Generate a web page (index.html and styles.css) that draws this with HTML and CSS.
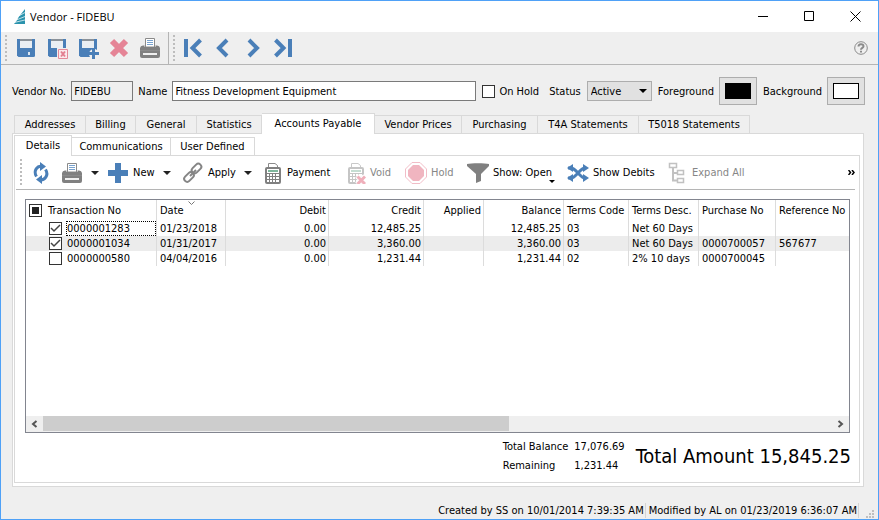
FILE: index.html
```html
<!DOCTYPE html>
<html lang="en">
<head>
    <meta charset="UTF-8">
    <meta name="viewport" content="width=device-width, initial-scale=1.0">
    <title>Vendor - FIDEBU</title>
    <link rel="stylesheet" href="styles.css">
</head>
<body>
    <!-- Shared icon shapes -->
    <svg class="defs" width="0" height="0" aria-hidden="true">
        <symbol id="floppy" viewBox="0 0 22 22">
            <path fill="#4a7fb8" d="M2 2H20V18.500a1.500 1.500 0 0 1-1.500 1.500H3.500L2 18.500z"/>
            <path fill="#8b9299" d="M5 2H17V4H5z"/>
            <path fill="#e9eef3" d="M5 4H17V11H5z"/>
            <path fill="#dbe7f3" d="M13 15H15V18H13z"/>
        </symbol>
        <symbol id="printer" viewBox="0 0 22 22">
            <path fill="#fff" stroke="#8a8a8a" d="M6.500 1.500H15.500V10H6.500z"/>
            <path stroke="#79a3cf" d="M8 3.500H14M8 5.500H14M8 7.500H14"/>
            <path fill="#808080" d="M4 8.500H5.500V10H16.500V8.500H18a3 3 0 0 1 3 2.500V13H1V11a3 3 0 0 1 3-2.500zM1 14H21V19a2 2 0 0 1-2 2H3a2 2 0 0 1-2-2z"/>
            <path fill="#efefef" d="M4 16H18V18H4z"/>
            <path stroke="#8a8a8a" d="M1 13.500H21"/>
        </symbol>
        <symbol id="calc" viewBox="0 0 18 22">
            <path fill="#fff" stroke="#8a8a8a" d="M4.500 6V1.500H11l2.500 2V6"/>
            <path fill="#808080" d="M3 5H15a2 2 0 0 1 2 2V20a2 2 0 0 1-2 2H3a2 2 0 0 1-2-2V7a2 2 0 0 1 2-2z"/>
            <path fill="#fff" d="M3 7H15V11H3zM3 12H5V14H3zM6 12H8V14H6zM9 12H11V14H9zM12 12H15V14H12zM3 15H5V17H3zM6 15H8V17H6zM9 15H11V17H9zM12 15H15V17H12zM3 18H5V20H3zM6 18H8V20H6zM9 18H11V20H9zM12 18H15V20H12z"/>
            <path fill="#7fb69c" d="M4 8H14V10H4z"/>
        </symbol>
    </svg>

    <div class="window">
        <header class="title-bar">
            <svg class="logo" width="12" height="16" viewBox="0 0 12 16"><path fill="#2b93ad" d="M11 0V15H0L2 12.500L3 11L5 7.500z"/><path stroke="#fff" stroke-width=".7" d="M2 8.500L11 3.500M1 11.500L11 7.500M0 13.500L11 11"/></svg>
            <h1>Vendor - FIDEBU</h1>
            <button type="button" class="win-btn" aria-label="Minimize"><svg width="11" height="11"><path stroke="#000" d="M0 5.500H10"/></svg></button>
            <button type="button" class="win-btn" aria-label="Maximize"><svg width="11" height="11"><path fill="none" stroke="#000" d="M.5.5H9.500V9.500H.5z"/></svg></button>
            <button type="button" class="win-btn" aria-label="Close"><svg width="11" height="11"><path stroke="#000" d="M.5.5L10.500 10.500M10.500.5L.5 10.500"/></svg></button>
        </header>

        <!-- Main toolbar -->
        <div class="main-toolbar">
            <div class="tool-group">
                <span class="grip"></span>
                <button type="button" class="icon-btn" aria-label="Save"><svg width="22" height="22"><use href="#floppy"/></svg></button>
                <button type="button" class="icon-btn" aria-label="Save and close"><svg width="22" height="22"><use href="#floppy"/><path fill="#efefef" d="M11 11H22V22H11z"/><path fill="#fbeaec" stroke="#e48a99" d="M12.500 12.500H21.500V21.500H12.500z"/><path stroke="#e27f90" stroke-width="2" d="M15 14.500L19 19.500M19 14.500L15 19.500"/></svg></button>
                <button type="button" class="icon-btn" aria-label="Save and new"><svg width="22" height="22"><use href="#floppy"/><circle cx="17" cy="17" r="5" fill="#efefef"/><path stroke="#4a7fb8" stroke-width="3" d="M16.500 11.500V22M11.500 16.500H22"/></svg></button>
                <button type="button" class="icon-btn" aria-label="Delete"><svg width="22" height="22"><path stroke="#e58496" stroke-width="6" d="M4 4L18 18M18 4L4 18"/></svg></button>
                <button type="button" class="icon-btn" aria-label="Print"><svg width="22" height="22"><use href="#printer"/></svg></button>
            </div>
            <div class="tool-group">
                <span class="grip"></span>
                <button type="button" class="icon-btn" aria-label="First"><svg width="22" height="22"><path fill="none" stroke="#4a7fb8" stroke-width="4" d="M4 2V20M18.500 3L10.500 11L18.500 19"/></svg></button>
                <button type="button" class="icon-btn" aria-label="Previous"><svg width="22" height="22"><path fill="none" stroke="#4a7fb8" stroke-width="4" d="M15 3L7 11L15 19"/></svg></button>
                <button type="button" class="icon-btn" aria-label="Next"><svg width="22" height="22"><path fill="none" stroke="#4a7fb8" stroke-width="4" d="M7 3L15 11L7 19"/></svg></button>
                <button type="button" class="icon-btn" aria-label="Last"><svg width="22" height="22"><path fill="none" stroke="#4a7fb8" stroke-width="4" d="M3.500 3L11.500 11L3.500 19M18 2V20"/></svg></button>
            </div>
            <button type="button" class="help-btn" aria-label="Help"><svg width="14" height="14" fill="none" stroke="#8a8a8a"><circle cx="7" cy="7" r="6.300"/><path stroke-width="2" d="M4.500 5.500C4.500 2.500 9.500 2.500 9.500 5.200C9.500 7 7 6.600 7 8.800M7 9.800V11.500"/></svg></button>
        </div>

        <!-- Vendor fields -->
        <form class="vendor-form">
            <label for="vendorNo">Vendor No.</label>
            <input type="text" id="vendorNo" class="vendor-no" value="FIDEBU" readonly>
            <label for="vendorName">Name</label>
            <input type="text" id="vendorName" class="vendor-name" value="Fitness Development Equipment">
            <input type="checkbox" id="onHold" class="check">
            <label for="onHold" class="hold-label">On Hold</label>
            <label for="status">Status</label>
            <span class="select-box">
                <select id="status"><option>Active</option></select>
            </span>
            <label for="foreground">Foreground</label>
            <button type="button" id="foreground" class="color-btn"><span class="swatch swatch-black"></span></button>
            <label for="background">Background</label>
            <button type="button" id="background" class="color-btn"><span class="swatch"></span></button>
        </form>

        <main class="content">
            <div class="tabs main-tabs" role="tablist">
                <button type="button" role="tab">Addresses</button>
                <button type="button" role="tab">Billing</button>
                <button type="button" role="tab">General</button>
                <button type="button" role="tab">Statistics</button>
                <button type="button" role="tab" class="active" aria-selected="true">Accounts Payable</button>
                <button type="button" role="tab">Vendor Prices</button>
                <button type="button" role="tab">Purchasing</button>
                <button type="button" role="tab">T4A Statements</button>
                <button type="button" role="tab">T5018 Statements</button>
            </div>
            <div class="pane">
                <div class="tabs sub-tabs" role="tablist">
                    <button type="button" role="tab" class="active" aria-selected="true">Details</button>
                    <button type="button" role="tab">Communications</button>
                    <button type="button" role="tab">User Defined</button>
                </div>
                <div class="sub-pane">
                    <!-- Transaction toolbar -->
                    <div class="sub-toolbar">
                        <span class="grip"></span>
                        <button type="button" aria-label="Refresh"><svg width="22" height="22" fill="none" stroke="#4a7fb8" stroke-width="3"><path d="M13 4.500C7 3 3 9 6.500 14.500M9 17.500C15 19 19 13 15.500 7.500"/><path fill="#4a7fb8" stroke="none" d="M10 0L16 4.500L10 9zM12 13V22L6 17.500z"/></svg></button>
                        <button type="button" aria-label="Print"><svg width="22" height="22"><use href="#printer"/></svg><span class="caret"></span></button>
                        <button type="button"><svg width="22" height="22"><path fill="#4a7fb8" d="M8 1H14V8H21V14H14V21H8V14H1V8H8z"/></svg><span>New</span><span class="caret"></span></button>
                        <button type="button"><svg width="22" height="22" fill="none" stroke="#858585" stroke-width="2"><rect x="-5.500" y="-3" width="11" height="6" rx="3" transform="translate(14.500 6.500) rotate(-45)"/><rect x="-5.500" y="-3" width="11" height="6" rx="3" transform="translate(7 15) rotate(-45)"/><path d="M8 14L14 8"/></svg><span>Apply</span><span class="caret"></span></button>
                        <button type="button"><svg width="22" height="22"><use href="#calc" x="3" width="18" height="22"/></svg><span>Payment</span></button>
                        <button type="button" disabled><svg width="22" height="22"><use href="#calc" x="3" width="18" height="22"/><path stroke="#fff" stroke-width="5" d="M13 14L21 22M21 14L13 22"/><path stroke="#dc5068" stroke-width="3" d="M13.500 14.500L21 22M21 14.500L13.500 22"/></svg><span>Void</span></button>
                        <button type="button" disabled><svg width="22" height="22"><path fill="#fff" stroke="#e26f84" d="M7 .5H15L21.500 7V15L15 21.500H7L.5 15V7z"/><path fill="#df5c74" d="M8 3H14L19 8V14L14 19H8L3 14V8z"/></svg><span>Hold</span></button>
                        <button type="button"><svg width="22" height="22"><path fill="#808080" d="M0 2C4 1 18 1 22 2V4L14 12V19L9 21V12L0 4z"/></svg><span class="show-label">Show: Open</span></button>
                        <button type="button"><svg width="22" height="22" fill="none" stroke="#4a7fb8" stroke-width="3"><path d="M1 6H4C9 6 13 16 18 16M1 16H4C9 16 13 6 18 6"/><path fill="#4a7fb8" stroke="none" d="M16 2L22 6L16 10zM16 12L22 16L16 20zM6 2L0 6L6 10zM6 12L0 16L6 20z"/></svg><span>Show Debits</span></button>
                        <button type="button" disabled><svg width="22" height="22" fill="none" stroke="#777" stroke-width="1"><path stroke-width="2" d="M7 6V18.500H12M7 11H12"/><path stroke-width="1.500" d="M3.500 1.500H10.500V5.500H3.500zM11.500 8.500H17.500V12.500H11.500zM11.500 16.500H17.500V20.500H11.500z"/></svg><span>Expand All</span></button>
                        <button type="button" class="more-btn" aria-label="More"><svg width="7" height="5" fill="none" stroke="#000" stroke-width="1.500"><path d="M.5 0L2.500 2.500L.5 5M4 0L6 2.500L4 5"/></svg></button>
                    </div>

                    <!-- Transactions list -->
                    <div class="list-box">
                        <table class="transactions">
                            <colgroup>
                                <col class="w-trans"><col class="w-date"><col class="w-debit"><col class="w-credit"><col class="w-applied"><col class="w-balance"><col class="w-code"><col class="w-desc"><col class="w-purchase"><col>
                            </colgroup>
                            <thead>
                                <tr>
                                    <th><span class="cell-check"><input type="checkbox" class="check partial" id="selectAll"><label for="selectAll">Transaction No</label></span></th>
                                    <th class="sorted">Date<svg class="sort-mark" width="7" height="4" fill="none" stroke="#777"><path d="M.5.5L3.500 3.500L6.500.5"/></svg></th>
                                    <th class="num">Debit</th>
                                    <th class="num">Credit</th>
                                    <th class="num">Applied</th>
                                    <th class="num">Balance</th>
                                    <th>Terms Code</th>
                                    <th>Terms Desc.</th>
                                    <th>Purchase No</th>
                                    <th>Reference No</th>
                                </tr>
                            </thead>
                            <tbody>
                                <tr>
                                    <td><span class="cell-check"><input type="checkbox" class="check" id="t1283" checked><label for="t1283" class="focused">0000001283</label></span></td>
                                    <td>01/23/2018</td><td class="num">0.00</td><td class="num">12,485.25</td><td></td><td class="num">12,485.25</td><td>03</td><td>Net 60 Days</td><td></td><td></td>
                                </tr>
                                <tr class="alt">
                                    <td><span class="cell-check"><input type="checkbox" class="check" id="t1034" checked><label for="t1034">0000001034</label></span></td>
                                    <td>01/31/2017</td><td class="num">0.00</td><td class="num">3,360.00</td><td></td><td class="num">3,360.00</td><td>03</td><td>Net 60 Days</td><td>0000700057</td><td>567677</td>
                                </tr>
                                <tr>
                                    <td><span class="cell-check"><input type="checkbox" class="check" id="t580"><label for="t580">0000000580</label></span></td>
                                    <td>04/04/2016</td><td class="num">0.00</td><td class="num">1,231.44</td><td></td><td class="num">1,231.44</td><td>02</td><td>2% 10 days</td><td>0000700045</td><td></td>
                                </tr>
                            </tbody>
                        </table>
                        <div class="scrollbar">
                            <button type="button" aria-label="Scroll left"><svg width="7" height="8" fill="none" stroke="#555" stroke-width="2"><path d="M5.500 1L2 4L5.500 7"/></svg></button>
                            <div class="track"><div class="thumb"></div></div>
                            <button type="button" aria-label="Scroll right"><svg width="7" height="8" fill="none" stroke="#555" stroke-width="2"><path d="M1.500 1L5 4L1.500 7"/></svg></button>
                        </div>
                    </div>

                    <div class="totals">
                        <dl>
                            <dt>Total Balance</dt><dd>17,076.69</dd>
                            <dt>Remaining</dt><dd>1,231.44</dd>
                        </dl>
                        <p class="total-amount">Total Amount 15,845.25</p>
                    </div>
                </div>
            </div>
        </main>

        <footer class="status-bar">
            <span>Created by SS on 10/01/2014 7:39:35 AM</span>
            <span>Modified by AL on 01/23/2019 6:36:07 AM</span>
            <svg class="resize" width="8" height="8" fill="#bfbfbf"><path d="M6 0H8V2H6zM3 3H5V5H3zM6 3H8V5H6zM0 6H2V8H0zM3 6H5V8H3zM6 6H8V8H6z"/></svg>
        </footer>
    </div>
</body>
</html>
```
FILE: styles.css
```css
* {
    box-sizing: border-box;
}
body {
    margin: 0;
    font-family: Tahoma, "DejaVu Sans Condensed", "DejaVu Sans", sans-serif;
    font-size: 11px;
    line-height: 15px;
    color: #000;
    background-color: #efefef;
}
button, input, select {
    margin: 0;
    padding: 0;
    font: inherit;
    color: inherit;
    border: none;
    border-radius: 0;
    background: none;
    white-space: nowrap;
}
svg {
    display: block;
    flex: none;
}
.defs {
    position: absolute;
}
.window {
    display: flex;
    flex-direction: column;
    min-height: 100vh;
    border: 1px solid #4fa1f7;
}

/* Title bar */
.title-bar {
    display: flex;
    align-items: center;
    height: 31px;
    padding-left: 13px;
    background-color: #fff;
}
.title-bar h1 {
    flex: 1;
    margin: 0 0 0 4px;
    font: 11px "Open Sans", sans-serif;
}
.win-btn {
    display: flex;
    align-items: center;
    justify-content: center;
    width: 46px;
    height: 30px;
}

/* Main toolbar */
.main-toolbar {
    display: flex;
    height: 33px;
    border-bottom: 1px solid #b5b5b5;
}
.tool-group {
    display: flex;
    align-items: center;
    padding-left: 4px;
}
.tool-group + .tool-group {
    margin-left: 3px;
    border-left: 1px solid #b5b5b5;
}
.grip {
    width: 2px;
    height: 27px;
    margin-right: 3px;
    background: repeating-linear-gradient(#bdbdbd 0 2px, transparent 2px 4px);
}
.icon-btn {
    display: flex;
    justify-content: center;
    width: 31px;
}
.tool-group + .tool-group .icon-btn {
    width: 30px;
}
.help-btn {
    margin-left: auto;
    padding-right: 10px;
}

/* Vendor fields */
.vendor-form {
    display: flex;
    align-items: center;
    padding: 12px 13px 8px 11px;
    white-space: nowrap;
}
.vendor-form input[type="text"] {
    height: 20px;
    padding: 0 2px;
    border: 1px solid #7a7a7a;
    background-color: #fff;
}
.vendor-form input.vendor-no {
    width: 62px;
    margin: 0 5px;
    background-color: #efefef;
}
.vendor-form .vendor-name {
    flex: 1;
    min-width: 0;
    margin: 0 6px 0 5px;
}
.check {
    appearance: none;
    flex: none;
    width: 13px;
    height: 13px;
    border: 1px solid #333;
    background: #fff center no-repeat;
}
.check:checked {
    background-image: url("data:image/svg+xml,%3Csvg xmlns='http://www.w3.org/2000/svg' width='11' height='11'%3E%3Cpath d='M1 5l3 3 6-6' fill='none' stroke='%23444' stroke-width='1.500'/%3E%3C/svg%3E");
}
.check.partial {
    background-image: linear-gradient(#222, #222);
    background-size: 7px 7px;
}
.hold-label {
    margin: 0 10px 0 4px;
}
.select-box {
    position: relative;
    margin: 0 6px;
}
.select-box select {
    display: block;
    appearance: none;
    width: 65px;
    height: 20px;
    padding: 0 3px;
    border: 1px solid #adadad;
    background-color: #e1e1e1;
}
.select-box::after {
    content: "";
    position: absolute;
    right: 5px;
    top: 8px;
    border: 4px solid transparent;
    border-top-color: #000;
    border-bottom: none;
    pointer-events: none;
}
.color-btn {
    display: flex;
    align-items: center;
    justify-content: center;
    width: 38px;
    height: 28px;
    margin: 0 6px 0 5px;
    border: 1px solid #adadad;
    background-color: #e1e1e1;
}
.color-btn:last-child {
    margin-right: 0;
}
.swatch {
    width: 26px;
    height: 16px;
    border: 1px solid #000;
    background-color: #fff;
}
.swatch-black {
    background-color: #000;
}

/* Tabs */
.content {
    display: flex;
    flex: 1;
    flex-direction: column;
    padding: 0 14px 0 11px;
}
.tabs {
    display: grid;
    align-items: end;
    margin-bottom: -1px;
}
.main-tabs {
    grid-template-columns: 72px 50px 61px 65px 113px 87px 76px 101px 111px;
    height: 21px;
    padding-left: 2px;
}
.sub-tabs {
    grid-template-columns: 58px 99px 84px;
    height: 21px;
}
.tabs button {
    height: 19px;
    border: 1px solid #d9d9d9;
    border-left: none;
}
.tabs button:first-child {
    border-left: 1px solid #d9d9d9;
}
.tabs .active {
    position: relative;
    height: 21px;
    padding-bottom: 2px;
    background-color: #fff;
    border-bottom: none;
}
.pane {
    display: flex;
    flex: 1;
    flex-direction: column;
    padding: 1px 3px 3px 1px;
    border: 1px solid #d9d9d9;
    background-color: #fff;
}
.sub-pane {
    display: flex;
    flex: 1;
    flex-direction: column;
    padding: 0 4px 0 1px;
    border: 1px solid #d9d9d9;
}

/* Transaction toolbar */
.sub-toolbar {
    display: grid;
    grid-template-columns: 14px 31px 46px 75px 79px 83px 61px 62px 100px 99px 1fr auto;
    align-items: center;
    height: 34px;
    border-bottom: 1px solid #b5b5b5;
}
.sub-toolbar .grip {
    margin-left: 4px;
}
.sub-toolbar button {
    display: flex;
    align-items: center;
    gap: 4px;
}
.sub-toolbar button:disabled {
    color: #868686;
}
.sub-toolbar button:disabled svg {
    opacity: 0.45;
}
.caret {
    margin: 0 3px 0 4px;
    border: 4px solid transparent;
    border-top-color: #222;
    border-bottom: none;
}
.show-label {
    position: relative;
}
.show-label::after {
    content: "";
    position: absolute;
    right: -3px;
    bottom: -3px;
    border: 3px solid transparent;
    border-top-color: #000;
    border-bottom: none;
}

/* Transactions list */
.list-box {
    display: flex;
    flex: 1;
    flex-direction: column;
    margin: 9px 5px 0 9px;
    border: 1px solid #82858f;
}
.transactions {
    width: 100%;
    table-layout: fixed;
    border-collapse: separate;
    border-spacing: 0;
}
.w-trans { width: 131px; }
.w-date { width: 69px; }
.w-debit { width: 103px; }
.w-credit { width: 95px; }
.w-applied { width: 60px; }
.w-balance { width: 80px; }
.w-code { width: 65px; }
.w-desc { width: 70px; }
.w-purchase { width: 77px; }
.transactions th,
.transactions td {
    height: 15px;
    padding: 0 2px 0 3px;
    line-height: 15px;
    font-weight: normal;
    text-align: left;
    white-space: nowrap;
    border-right: 1px solid #dcdcdc;
}
.transactions th {
    height: 21px;
}
.transactions th:last-child,
.transactions td:last-child {
    border-right: none;
}
.transactions .num {
    text-align: right;
}
.alt {
    background-color: #ececec;
}
.cell-check {
    display: flex;
    align-items: center;
    gap: 6px;
}
.cell-check label {
    flex: 1;
}
td .cell-check {
    height: 15px;
    padding-left: 20px;
    gap: 4px;
}
td .cell-check label {
    padding-left: 1px;
}
.cell-check .focused {
    margin-right: -2px;
    outline: 1px dotted #000;
    outline-offset: -1px;
}
.transactions .sorted {
    position: relative;
}
.sort-mark {
    position: absolute;
    top: 1px;
    left: 31px;
}
.scrollbar {
    display: flex;
    height: 16px;
    margin-top: auto;
    background-color: #efefef;
}
.scrollbar button {
    display: flex;
    align-items: center;
    justify-content: center;
    width: 17px;
}
.track {
    flex: 1;
}
.thumb {
    width: 59%;
    height: 15px;
    background-color: #cdcdcd;
}

/* Totals */
.totals {
    display: flex;
    align-items: center;
    justify-content: flex-end;
    gap: 11px;
    height: 49px;
    padding: 0 4px 4px 0;
}
.totals dl {
    display: grid;
    grid-template-columns: auto auto;
    gap: 4px 6px;
    margin: 0;
}
.totals dd {
    margin: 0;
}
.total-amount {
    margin: 0;
    font-size: 20px;
    line-height: 24px;
}

/* Status bar */
.status-bar {
    display: flex;
    align-items: flex-end;
    justify-content: flex-end;
    height: 32px;
    padding: 0 4px 1px 0;
}
.status-bar span {
    margin-left: 3px;
    padding-right: 1px;
    border-right: 1px solid #d4d4d4;
}
.resize {
    margin-left: 7px;
}
```
